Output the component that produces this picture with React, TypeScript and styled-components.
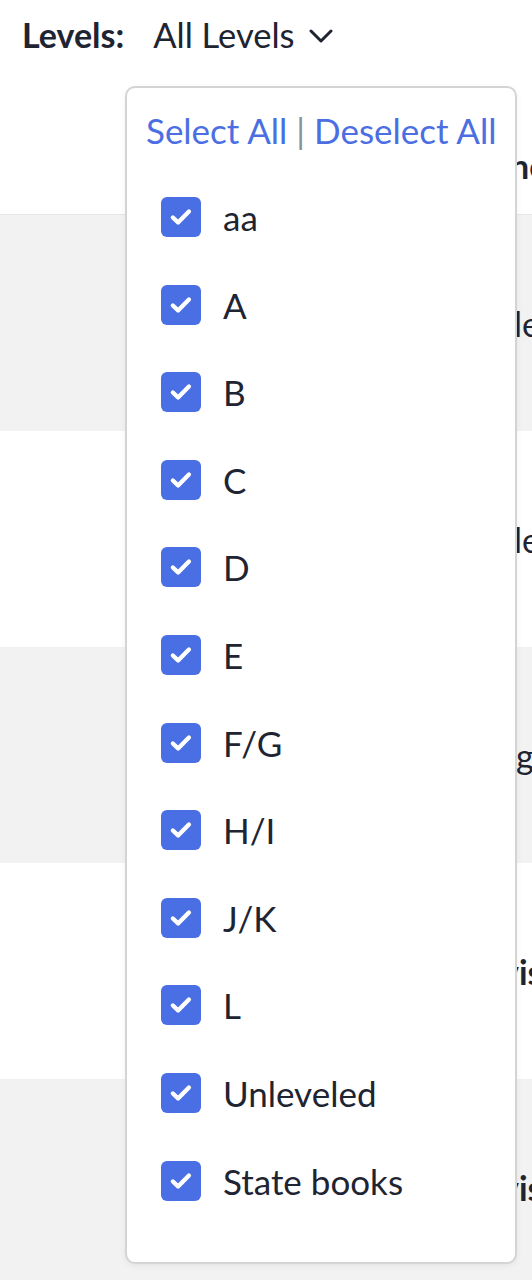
import styled, { createGlobalStyle } from "styled-components";

const GlobalStyle = createGlobalStyle`
  html, body {
    margin: 0;
    padding: 0;
    background: #ffffff;
    font-family: Lato, "Open Sans", sans-serif;
    color: #1e2432;
  }
`;

const LEVELS = ["aa", "A", "B", "C", "D", "E", "F/G", "H/I", "J/K", "L", "Unleveled", "State books"];

// right-hand column of the table, mostly hidden behind the open dropdown
const ROWS = [
  { text: "le", bold: false, offset: 514 },
  { text: "le", bold: false, offset: 514 },
  { text: "gg", bold: false, offset: 516 },
  { text: "vis", bold: true, offset: 501 },
  { text: "vis", bold: true, offset: 501 },
];

const Page = styled.div`
  position: relative;
  width: 532px;
  height: 1280px;
  overflow: hidden;
`;

const FilterBar = styled.div`
  display: flex;
  align-items: center;
  height: 68px;
  padding-left: 22px;
  font-size: 34px;
`;

const FilterLabel = styled.span`
  font-weight: 700;
  margin-right: 29px;
`;

const Trigger = styled.button`
  display: flex;
  align-items: center;
  gap: 14px;
  border: 0;
  background: none;
  padding: 0;
  font: inherit;
  font-size: 34.5px;
  color: inherit;
  cursor: pointer;
`;

const ChevronWrap = styled.span`
  display: flex;
  margin-top: 3px;
`;

const Table = styled.div`
  margin-top: 12px;
`;

const HeaderRow = styled.div`
  display: flex;
  align-items: flex-end;
  height: 135px;
  padding-bottom: 28px;
  box-sizing: border-box;
  border-bottom: 1px solid #e6e6e6;
`;

const Row = styled.div<{ $striped: boolean }>`
  display: flex;
  align-items: center;
  height: 216px;
  background: ${(p) => (p.$striped ? "#f2f2f2" : "#ffffff")};
`;

const Cell = styled.span<{ $bold?: boolean; $offset: number }>`
  padding-left: ${(p) => p.$offset}px;
  font-size: 34px;
  font-weight: ${(p) => (p.$bold ? 700 : 400)};
  white-space: nowrap;
`;

const Dropdown = styled.div`
  position: absolute;
  top: 86px;
  left: 125px;
  width: 392px;
  height: 1178px;
  box-sizing: border-box;
  padding: 21px 0 0 19px;
  background: #ffffff;
  border: 2px solid #d4d4d4;
  border-radius: 10px;
  box-shadow: 0 2px 6px rgba(0, 0, 0, 0.06);
  z-index: 2;
`;

const Actions = styled.div`
  font-size: 35px;
  color: #4b6fe2;
  white-space: nowrap;
`;

const ActionLink = styled.a`
  color: inherit;
  text-decoration: none;
  cursor: pointer;
`;

const Divider = styled.span`
  color: #8a8f99;
  margin: 0 9px;
`;

const List = styled.div`
  display: flex;
  flex-direction: column;
  gap: 47.6px;
  margin-top: 46px;
  padding-left: 15px;
`;

const Item = styled.label`
  display: flex;
  align-items: center;
  gap: 22px;
  height: 40px;
  font-size: 35px;
  cursor: pointer;
`;

const Box = styled.span`
  display: flex;
  align-items: center;
  justify-content: center;
  width: 40px;
  height: 40px;
  border-radius: 6px;
  background: #4a6ee3;
  flex-shrink: 0;
`;

const Check = () => (
  <svg width="26" height="26" viewBox="0 0 24 24" fill="none">
    <path d="M4.5 12.5l4.8 4.5 10-10" stroke="#fff" strokeWidth="4" strokeLinecap="round" strokeLinejoin="round" />
  </svg>
);

const Chevron = () => (
  <svg width="24" height="14" viewBox="0 0 24 14" fill="none">
    <path d="M2 2l10 10 10-10" stroke="#1e2432" strokeWidth="3" strokeLinecap="round" strokeLinejoin="round" />
  </svg>
);

export default function App() {
  return (
    <Page>
      <GlobalStyle />
      <FilterBar>
        <FilterLabel>Levels:</FilterLabel>
        <Trigger>
          All Levels
          <ChevronWrap>
            <Chevron />
          </ChevronWrap>
        </Trigger>
      </FilterBar>
      <Table>
        <HeaderRow>
          <Cell $bold $offset={510}>
            he
          </Cell>
        </HeaderRow>
        {ROWS.map((r, i) => (
          <Row key={i} $striped={i % 2 === 0}>
            <Cell $bold={r.bold} $offset={r.offset}>
              {r.text}
            </Cell>
          </Row>
        ))}
      </Table>
      <Dropdown>
        <Actions>
          <ActionLink>Select All</ActionLink>
          <Divider>|</Divider>
          <ActionLink>Deselect All</ActionLink>
        </Actions>
        <List>
          {LEVELS.map((l) => (
            <Item key={l}>
              <Box>
                <Check />
              </Box>
              {l}
            </Item>
          ))}
        </List>
      </Dropdown>
    </Page>
  );
}
